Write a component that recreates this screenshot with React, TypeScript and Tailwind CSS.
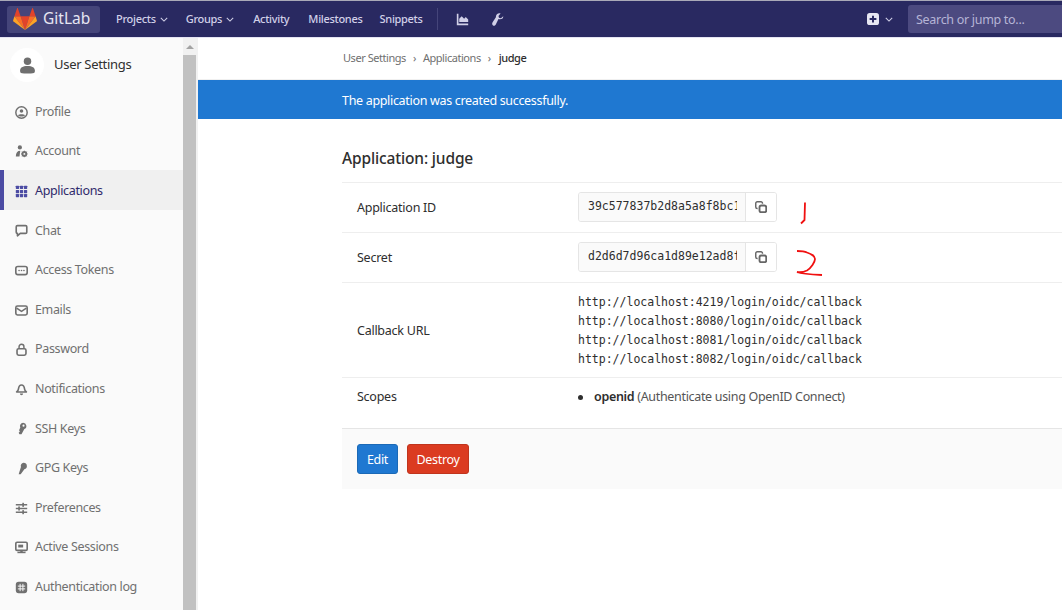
import type { ReactNode } from 'react'

const sans = "font-['Noto_Sans',sans-serif]"

const Icon = ({ children, className = 'w-[13px] h-[13px]' }: { children: ReactNode; className?: string }) => (
  <svg viewBox="0 0 16 16" fill="currentColor" className={className}>
    {children}
  </svg>
)

const icons: Record<string, ReactNode> = {
  profile: (
    <>
      <circle cx="8" cy="8" r="7" fill="none" stroke="currentColor" strokeWidth="1.8" />
      <circle cx="8" cy="6.2" r="2.2" />
      <path d="M3.8 11.6C5 9.8 11 9.8 12.2 11.6 11 13.4 5 13.4 3.8 11.6z" />
    </>
  ),
  account: (
    <>
      <circle cx="6" cy="3" r="2.6" />
      <path d="M1 14c0-4.500 2-7 5.500-7l-1 7z" />
      <circle cx="11.500" cy="11" r="2.400" fill="none" stroke="currentColor" strokeWidth="2.200" />
      <path d="M11.500 7v8M7.500 11h8M8.700 8.200l5.600 5.600M14.300 8.200l-5.600 5.600" stroke="currentColor" strokeWidth="1.200" />
      <circle cx="11.500" cy="11" r="1.100" fill="#fafafa" />
    </>
  ),
  apps: (
    <>
      {[1, 6, 11].map((y) =>
        [1, 6, 11].map((x) => <rect key={`${x}-${y}`} x={x} y={y} width="4" height="4" rx="0.6" />),
      )}
    </>
  ),
  chat: <path d="M3 2h10a1.500 1.500 0 0 1 1.500 1.500v6.500a1.500 1.500 0 0 1-1.500 1.500H6.500L3 14.500V11.500a1.500 1.500 0 0 1-1.500-1.500V3.500A1.500 1.500 0 0 1 3 2z" fill="none" stroke="currentColor" strokeWidth="2" strokeLinejoin="round" />,
  token: (
    <>
      <rect x="1" y="3" width="14" height="10" rx="2.500" fill="none" stroke="currentColor" strokeWidth="2" />
      <circle cx="5" cy="8" r="1" />
      <circle cx="8" cy="8" r="1" />
      <circle cx="11" cy="8" r="1" />
    </>
  ),
  mail: (
    <>
      <rect x="1" y="2.500" width="14" height="11" rx="2" fill="none" stroke="currentColor" strokeWidth="2" />
      <path d="M2 5l6 4 6-4" fill="none" stroke="currentColor" strokeWidth="2" />
    </>
  ),
  lock: (
    <>
      <path d="M5 7V4.500a3 3 0 0 1 6 0V7" fill="none" stroke="currentColor" strokeWidth="1.800" />
      <rect x="2.500" y="7" width="11" height="8" rx="2" fill="none" stroke="currentColor" strokeWidth="2" />
    </>
  ),
  bell: (
    <>
      <path d="M8 2.500c3 0 3.500 2.500 3.800 5 .2 1.500 1 2.500 2.200 3.500H2c1.200-1 2-2 2.200-3.500.3-2.500.8-5 3.800-5z" fill="none" stroke="currentColor" strokeWidth="2" strokeLinejoin="round" />
      <path d="M6 13h4a2 2 0 0 1-4 0z" />
    </>
  ),
  ssh: (
    <path
      fillRule="evenodd"
      d="M10 1a4 4 0 0 1 1.500 7.700L8 15H5.500L4.500 13.200 6 11.600 5 10.200 6.500 6.800A4 4 0 0 1 10 1zm.500 2.200a1.300 1.300 0 1 0 0 2.600 1.300 1.300 0 0 0 0-2.600z"
    />
  ),
  gpg: <path d="M10.500 1a4 4 0 0 1 1 7.900L7 15H4.500l2.800-8.700A4 4 0 0 1 10.500 1z" />,
  prefs: (
    <>
      <rect x="1" y="2.500" width="14" height="1.800" />
      <rect x="1" y="7.100" width="14" height="1.800" />
      <rect x="1" y="11.700" width="14" height="1.800" />
      <rect x="9" y="1" width="2" height="5" />
      <rect x="4" y="5.500" width="2" height="5" />
      <rect x="9" y="10" width="2" height="5" />
    </>
  ),
  sessions: (
    <>
      <rect x="1" y="1.500" width="14" height="10" rx="1.500" fill="none" stroke="currentColor" strokeWidth="2" />
      <rect x="4" y="4.500" width="6" height="3.500" />
      <rect x="6.500" y="11" width="3" height="2.500" />
      <rect x="3" y="13.200" width="10" height="1.800" />
    </>
  ),
  log: (
    <>
      <rect x="1" y="1" width="14" height="14" rx="3.500" />
      <path d="M6.300 3.500v9M9.700 3.500v9M3.500 6.300h9M3.500 9.700h9" stroke="#fafafa" strokeWidth="1.200" />
    </>
  ),
}

const sideItems = [
  { label: 'Profile', icon: 'profile' },
  { label: 'Account', icon: 'account' },
  { label: 'Applications', icon: 'apps', active: true },
  { label: 'Chat', icon: 'chat' },
  { label: 'Access Tokens', icon: 'token' },
  { label: 'Emails', icon: 'mail' },
  { label: 'Password', icon: 'lock' },
  { label: 'Notifications', icon: 'bell' },
  { label: 'SSH Keys', icon: 'ssh' },
  { label: 'GPG Keys', icon: 'gpg' },
  { label: 'Preferences', icon: 'prefs' },
  { label: 'Active Sessions', icon: 'sessions' },
  { label: 'Authentication log', icon: 'log' },
]

const callbacks = [
  'http://localhost:4219/login/oidc/callback',
  'http://localhost:8080/login/oidc/callback',
  'http://localhost:8081/login/oidc/callback',
  'http://localhost:8082/login/oidc/callback',
]

const Chevron = ({ className = '' }: { className?: string }) => (
  <svg viewBox="0 0 10 6" fill="none" stroke="currentColor" strokeWidth="1.300" className={`w-[8px] h-[5px] ${className}`}>
    <path d="M1 1l4 4 4-4" />
  </svg>
)

const Logo = () => (
  <svg viewBox="0 0 24 22" className="w-[24px] h-[22px]">
    <path d="M12 22L7.600 8.300h8.800z" fill="#e24329" />
    <path d="M12 22L7.600 8.300H1.400z" fill="#fc6d26" />
    <path d="M12 22l4.400-13.700h6.200z" fill="#fc6d26" />
    <path d="M1.400 8.300L.1 12.400c-.1.400 0 .800.400 1.100L12 22z" fill="#fca326" />
    <path d="M22.600 8.300l1.300 4.100c.1.400 0 .800-.4 1.100L12 22z" fill="#fca326" />
    <path d="M1.400 8.300h6.200L4.900.4c-.1-.4-.7-.4-.9 0z" fill="#e24329" />
    <path d="M22.600 8.300h-6.200L19.100.4c.1-.4.7-.4.900 0z" fill="#e24329" />
  </svg>
)

const CopyIcon = () => (
  <svg viewBox="0 0 16 16" fill="none" stroke="#666" strokeWidth="1.900" className="w-[12px] h-[12px]">
    <path d="M10 3.500V3a2 2 0 0 0-2-2H3a2 2 0 0 0-2 2v5a2 2 0 0 0 2 2h.5" />
    <rect x="6" y="6" width="9" height="9" rx="2.500" fill="#fff" strokeWidth="2.500" />
  </svg>
)

const SecretField = ({ value }: { value: string }) => (
  <div className="flex h-[30px] w-[199px] mb-[1px] border border-[#e5e5e5] rounded-[3px] overflow-hidden">
    <input
      readOnly
      value={value}
      className="w-[166px] pl-[9px] pr-[8px] bg-[#fafafa] text-[11.5px] tracking-normal text-[#2e2e2e] font-['DejaVu_Sans_Mono',monospace] outline-none"
    />
    <button className="flex-1 flex items-center justify-center bg-white border-l border-[#e5e5e5]">
      <CopyIcon />
    </button>
  </div>
)

export default function App() {
  return (
    <div className={`h-[610px] w-[1062px] overflow-hidden flex flex-col bg-white ${sans}`}>
      {/* Navbar */}
      <header className="h-[38px] shrink-0 flex items-center bg-[#292961] border-t border-[#a9a9b8] border-b border-b-[#e4e3f2] text-[#d1d0e8] text-[11px] font-medium tracking-[-0.3px]">
        <div className="ml-[7px] h-[27px] w-[93px] flex items-center gap-[6px] pl-[6px] rounded-[3px] bg-[#45457a] text-[#e6e6f2] text-[15.500px] font-normal tracking-normal">
          <Logo />
          GitLab
        </div>
        <span className="ml-[16px] flex items-center gap-[4px]">Projects <Chevron /></span>
        <span className="ml-[18px] flex items-center gap-[4px]">Groups <Chevron /></span>
        <span className="ml-[19px]">Activity</span>
        <span className="ml-[19px]">Milestones</span>
        <span className="ml-[17px]">Snippets</span>
        <div className="ml-[14px] w-px h-[22px] bg-[#45457a]" />
        <svg viewBox="0 0 16 16" fill="currentColor" className="ml-[18px] w-[13px] h-[13px]">
          <path d="M1 1h2v12h12v2H1z" />
          <path d="M4 11V7l3-3 3 3 2-2 3 3v3z" />
        </svg>
        <svg viewBox="0 0 16 16" fill="currentColor" className="ml-[22px] w-[13px] h-[13px]">
          <path d="M15 4l-2.800 2.500-2.400-.6-.6-2.300L11.800.7C8.800-.3 5.800 1.800 6 5.200L2 11.500c-.9 1.400-.7 3 .5 3.800s2.600.2 3.400-1.300l3.300-6.500C12.400 8.300 15.500 7 15 4z" />
        </svg>
        <svg viewBox="0 0 16 16" className="ml-auto w-[12px] h-[12px]">
          <rect x="0" y="0" width="16" height="16" rx="3.500" fill="#e6e6f2" />
          <path d="M8 3.500v9M3.500 8h9" stroke="#292961" strokeWidth="2.600" />
        </svg>
        <Chevron className="ml-[6px]" />
        <div className="ml-[15px] h-[28px] w-[154px] flex items-center pl-[8px] pt-[2px] rounded-l-[3px] bg-[#4c4a80] text-[#b6b5d6] text-[12.500px] font-normal tracking-[-0.3px]">
          Search or jump to...
        </div>
      </header>

      <div className="flex-1 flex min-h-0">
        {/* Sidebar */}
        <aside className="w-[183px] shrink-0 bg-[#fafafa] flex flex-col">
          <div className="h-[52px] flex items-center pl-[10px] pt-[2px] gap-[10px] text-[13px] tracking-[-0.3px] text-[#303030]">
            <div className="w-[34px] h-[34px] rounded-full bg-white flex items-center justify-center text-[#707070]">
              <svg viewBox="0 0 16 16" fill="currentColor" className="w-[17px] h-[17px]">
                <circle cx="8" cy="4" r="3.500" />
                <path d="M1 13c0-3 2.500-4.500 7-4.500s7 1.500 7 4.500-2 2.500-7 2.500-7 .5-7-2.500z" />
              </svg>
            </div>
            User Settings
          </div>
          <nav className="pt-[1px]">
            {sideItems.map((item) => (
              <div
                key={item.label}
                className={`h-[39.600px] pt-[2.800px] flex items-center gap-[7px] text-[12.500px] tracking-[-0.35px] ${
                  item.active
                    ? 'pl-[11px] border-l-[4px] border-[#4b4ba3] bg-[#f0f0f0] text-[#2f2a6b]'
                    : 'pl-[15px] text-[#707070]'
                }`}
              >
                <Icon className={`w-[13px] h-[13px] ${item.active ? 'text-[#4b4ba3]' : ''}`}>{icons[item.icon]}</Icon>
                {item.label}
              </div>
            ))}
          </nav>
        </aside>

        {/* Scrollbar */}
        <div className="w-[15px] shrink-0 bg-[#f1f1f1] flex flex-col pr-[2px]">
          <div className="h-[17px] flex items-center justify-center">
            <div className="w-0 h-0 border-x-[4px] border-x-transparent border-b-[4px] border-b-[#a3a3a3]" />
          </div>
          <div className="flex-1 w-full bg-[#c1c1c1]" />
        </div>

        {/* Main */}
        <main className="flex-1 min-w-0">
          <div className="h-[42px] flex items-center pl-[145px] gap-[7px] text-[11px] tracking-[-0.45px] text-[#707070] border-b border-[#f0f0f0]">
            <span>User Settings</span>
            <span>›</span>
            <span>Applications</span>
            <span>›</span>
            <span className="text-[#2e2e2e] font-medium ml-[1px]">judge</span>
          </div>

          <div className="h-[39px] flex items-center pl-[144px] pt-[3px] bg-[#1f78d1] text-white text-[12.500px] tracking-[-0.32px]">
            The application was created successfully.
          </div>

          <div className="ml-[144px]">
            <h3 className="h-[63px] flex items-center pt-[17px] text-[15.500px] font-medium tracking-[-0.15px] text-[#2e2e2e]">
              Application: judge
            </h3>

            <div className="text-[12.500px] tracking-[-0.25px] text-[#2e2e2e]">
              <div className="h-[50px] flex items-center border-t border-[#eeeeee] pl-[15px]">
                <div className="w-[221px] pt-[2px]">Application ID</div>
                <SecretField value="39c577837b2d8a5a8f8bc1" />
                <svg viewBox="0 0 30 30" fill="none" stroke="#f01010" strokeWidth="1.800" className="ml-[18px] w-[30px] h-[30px] overflow-visible">
                  <path d="M10 9.500L9.500 27l-3.500 3.500" />
                </svg>
              </div>
              <div className="h-[50px] flex items-center border-t border-[#eeeeee] pl-[15px]">
                <div className="w-[221px] pt-[2px]">Secret</div>
                <SecretField value="d2d6d7d96ca1d89e12ad8f" />
                <svg viewBox="0 0 30 30" fill="none" stroke="#f01010" strokeWidth="1.800" className="ml-[18px] w-[30px] h-[30px] overflow-visible">
                  <path d="M2 8c4 0 7 0 10 1.500 4 1.500 8 3 8 6.500 0 3-4 9-8 11.500-3 1.500-7 2-10 1.500 5 2 15 2.500 25 3" />
                </svg>
              </div>
              <div className="h-[95px] pt-[2px] flex items-center border-t border-[#eeeeee] pl-[15px]">
                <div className="w-[221px]">Callback URL</div>
                <div className="font-['DejaVu_Sans_Mono',monospace] text-[11.500px] tracking-normal leading-[19px]">
                  {callbacks.map((url) => (
                    <div key={url}>{url}</div>
                  ))}
                </div>
              </div>
              <div className="h-[51px] border-t border-[#eeeeee] pl-[15px] flex pt-[10px]">
                <div className="w-[221px]">Scopes</div>
                <div className="flex items-start">
                  <span className="mt-[7px] w-[5px] h-[5px] rounded-full bg-[#2e2e2e]" />
                  <span className="ml-[11px] text-[#555555] tracking-[-0.32px]">
                    <strong className="font-semibold text-[#2e2e2e]">openid</strong> (Authenticate using OpenID Connect)
                  </span>
                </div>
              </div>
            </div>

            <div className="h-[61px] flex items-center gap-[9px] pl-[15px] bg-[#fafafa] border-t border-[#e5e5e5] text-[12.500px] tracking-[-0.3px] text-white">
              <button className="h-[30px] w-[41px] pt-[2px] rounded-[3px] bg-[#1f78d1] border border-[#1b69b6]">Edit</button>
              <button className="h-[30px] w-[62px] pt-[2px] rounded-[3px] bg-[#db3b21] border border-[#c0341d]">Destroy</button>
            </div>
          </div>
        </main>
      </div>
    </div>
  )
}
